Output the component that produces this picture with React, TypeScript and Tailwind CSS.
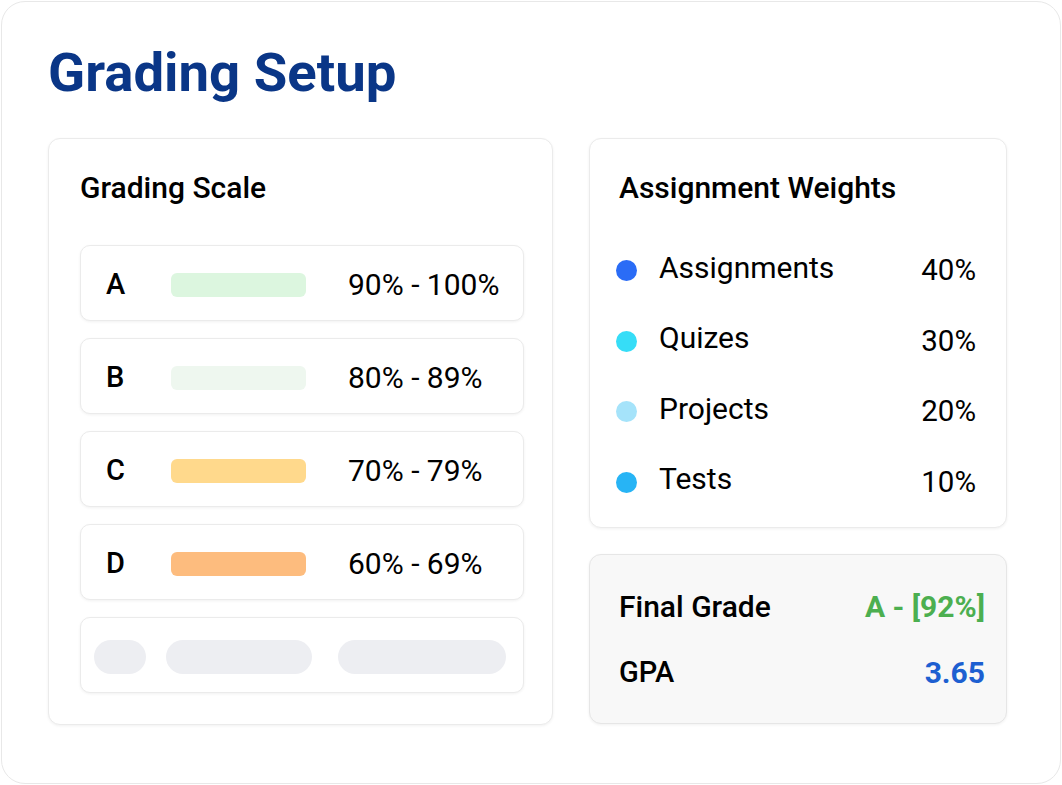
import React from "react";

const grades = [
  { letter: "A", bar: "bg-[#dcf6df]", range: "90% - 100%" },
  { letter: "B", bar: "bg-[#eef7ef]", range: "80% - 89%" },
  { letter: "C", bar: "bg-[#ffd98c]", range: "70% - 79%" },
  { letter: "D", bar: "bg-[#fdbc7e]", range: "60% - 69%" },
];

const weights = [
  { label: "Assignments", dot: "bg-[#2a6cf6]", pct: "40%" },
  { label: "Quizes", dot: "bg-[#36ddf7]", pct: "30%" },
  { label: "Projects", dot: "bg-[#a5e3fa]", pct: "20%" },
  { label: "Tests", dot: "bg-[#27b4f5]", pct: "10%" },
];

export default function App() {
  return (
    <div className="w-[1062px] h-[785px] bg-white p-px font-['Roboto',sans-serif] text-black">
      <div className="h-full rounded-[24px] border border-[#e8e8e8] pl-[46px] pt-[43px]">
        <h1 className="text-[54.5px] leading-none font-bold text-[#0a3687]">
          Grading Setup
        </h1>
        <div className="mt-[38px] flex gap-[36px]">
          {/* Left card */}
          <div className="w-[505px] h-[587px] rounded-[12px] border border-[#ebebeb] bg-white shadow-[0_1px_3px_rgba(0,0,0,0.06)] pl-[31px] pr-[28px] pt-[34px]">
            <div className="text-[30px] leading-none font-medium">Grading Scale</div>
            <div className="mt-[42px] flex flex-col gap-[17px]">
              {grades.map((g) => (
                <div
                  key={g.letter}
                  className="h-[76px] rounded-[10px] border border-[#ebebeb] bg-white shadow-[0_1px_3px_rgba(0,0,0,0.06)] flex items-center pl-[25px] pt-[4px]"
                >
                  <div className="w-[65px] text-[29px] leading-none font-medium">{g.letter}</div>
                  <div className={`w-[135px] h-[24px] rounded-[6px] ${g.bar}`} />
                  <div className="ml-[42px] text-[30px] leading-none">{g.range}</div>
                </div>
              ))}
              <div className="h-[76px] rounded-[10px] border border-[#ebebeb] bg-white shadow-[0_1px_3px_rgba(0,0,0,0.06)] flex items-center pl-[13px] pt-[4px]">
                <div className="w-[52px] h-[34px] rounded-full bg-[#edeef2]" />
                <div className="ml-[20px] w-[146px] h-[34px] rounded-full bg-[#edeef2]" />
                <div className="ml-[26px] w-[168px] h-[34px] rounded-full bg-[#edeef2]" />
              </div>
            </div>
          </div>

          {/* Right column */}
          <div className="w-[418px] flex flex-col gap-[26px]">
            <div className="h-[390px] rounded-[12px] border border-[#ebebeb] bg-white shadow-[0_1px_3px_rgba(0,0,0,0.06)] pl-[29px] pr-[30px] pt-[34px]">
              <div className="text-[30px] leading-none font-medium">Assignment Weights</div>
              <div className="mt-[33px] flex flex-col">
                {weights.map((w) => (
                  <div key={w.label} className="h-[70.5px] flex items-center">
                    <div className={`w-[21px] h-[21px] rounded-full ${w.dot} -ml-[3px]`} />
                    <div className="ml-[22px] text-[30px] leading-none pb-[6px]">{w.label}</div>
                    <div className="ml-auto text-[29.5px] leading-none">{w.pct}</div>
                  </div>
                ))}
              </div>
            </div>
            <div className="h-[170px] rounded-[12px] border border-[#e6e6e6] bg-[#f8f8f8] shadow-[0_1px_3px_rgba(0,0,0,0.06)] pl-[29px] pr-[21px] pt-[37px] flex flex-col gap-[36px]">
              <div className="flex items-center justify-between">
                <div className="text-[30px] leading-none font-medium">Final Grade</div>
                <div className="text-[30px] leading-none font-bold text-[#4caf50]">A - [92%]</div>
              </div>
              <div className="flex items-center justify-between">
                <div className="text-[29px] leading-none font-medium">GPA</div>
                <div className="text-[30px] leading-none font-bold text-[#1d5fd1]">3.65</div>
              </div>
            </div>
          </div>
        </div>
      </div>
    </div>
  );
}
